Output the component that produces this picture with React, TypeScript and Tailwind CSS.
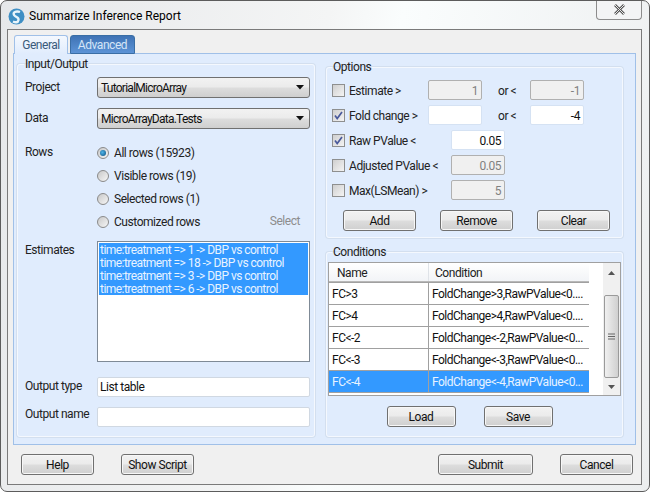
import React from "react";

const FONT = "font-['Roboto','Noto_Sans',sans-serif] tracking-[-0.45px]";

const BTN =
  "flex items-center justify-center h-[21px] pt-[1px] rounded-[3px] border border-[#707070] bg-[linear-gradient(#f2f2f2_0%,#ebebeb_48%,#dddddd_52%,#cfcfcf_100%)] shadow-[inset_0_0_0_1px_#f7f7f7] text-[12px] text-[#111]";

const Btn = ({ label, w }: { label: string; w: string }) => (
  <div className={`${BTN} ${w}`}>{label}</div>
);

const Combo = ({ value }: { value: string }) => (
  <div className="flex items-center justify-between h-[21px] w-[213px] rounded-[3px] border border-[#707070] bg-[linear-gradient(#f2f2f2_0%,#ebebeb_48%,#dddddd_52%,#cfcfcf_100%)] pl-[3px] pr-[3px] text-[12px] tracking-[-0.75px] text-[#111]">
    <span>{value}</span>
    <svg width="8" height="5" viewBox="0 0 8 5" className="mr-[2px]">
      <path d="M0 0h8L4 4.500z" fill="#111" />
    </svg>
  </div>
);

const Radio = ({ label, checked }: { label: string; checked?: boolean }) => (
  <div className="flex items-center h-[23px]">
    <div className="flex items-center justify-center w-[12px] h-[12px] rounded-full border border-[#8a8a8a] bg-[linear-gradient(135deg,#c8c8c8,#f6f6f6)]">
      {checked && <div className="w-[6px] h-[6px] rounded-full bg-[radial-gradient(circle_at_40%_40%,#4fb4e8,#0b4f80)]" />}
    </div>
    <span className="ml-[5px] text-[12px] text-[#222]">{label}</span>
  </div>
);

const Check = ({ checked }: { checked?: boolean }) => (
  <div className="flex items-center justify-center shrink-0 w-[13px] h-[13px] border border-[#8e8f8f] bg-[linear-gradient(135deg,#cfcfcf,#f4f4f4)]">
    {checked && (
      <svg width="9" height="9" viewBox="0 0 9 9">
        <path d="M1 4.500l2.200 3L8 1" fill="none" stroke="#4a5a9c" strokeWidth="1.700" />
      </svg>
    )}
  </div>
);

const Num = ({ value, w, off }: { value?: string; w: string; off?: boolean }) => (
  <div
    className={`flex items-center justify-end h-[20px] pt-[1px] pr-[3px] rounded-[2px] border text-[12px] ${w} ${
      off ? "bg-[#f0f0f0] border-[#b0b0b0] text-[#808080]" : "bg-white border-[#d5e2f3] text-[#111]"
    }`}
  >
    {value}
  </div>
);

const Group = ({ title, className, legend, children }: { title: string; className: string; legend: string; children: React.ReactNode }) => (
  <fieldset className={`rounded-[3px] border border-[#f4f8fe] shadow-[0_0_0_1px_#d3dfef] ${className}`}>
    <legend className={`px-[1px] text-[12px] leading-[16px] text-[#222] ${legend}`}>{title}</legend>
    {children}
  </fieldset>
);

const OptRow = ({ label, checked, children, w }: { label: string; checked?: boolean; children: React.ReactNode; w: string }) => (
  <div className="flex items-center h-[20px]">
    <Check checked={checked} />
    <span className={`ml-[4px] pt-[1px] text-[12px] text-[#222] whitespace-nowrap ${w}`}>{label}</span>
    {children}
  </div>
);

const ESTIMATES = [
  "time:treatment => 1 -> DBP vs control",
  "time:treatment => 18 -> DBP vs control",
  "time:treatment => 3 -> DBP vs control",
  "time:treatment => 6 -> DBP vs control",
];

const CONDITIONS = [
  ["FC>3", "FoldChange>3,RawPValue<0...."],
  ["FC>4", "FoldChange>4,RawPValue<0...."],
  ["FC<-2", "FoldChange<-2,RawPValue<0..."],
  ["FC<-3", "FoldChange<-3,RawPValue<0..."],
  ["FC<-4", "FoldChange<-4,RawPValue<0..."],
];

export default function App() {
  return (
    <div className={`relative w-[650px] h-[492px] overflow-hidden pl-[6px] pr-[7px] pt-[28px] pb-[6px] rounded-[7px] border border-[#5c5c5c] bg-[linear-gradient(100deg,#e6e8ea_0%,#f4f5f5_45%,#fafdfd_55%,#eceeef_100%)] ${FONT}`}>
      {/* Title bar */}
      <div className="absolute left-[7px] top-[6px] flex items-center">
        <svg width="17" height="17" viewBox="0 0 17 17">
          <circle cx="8.500" cy="8.500" r="8" fill="#3f8fc4" />
          <path d="M12 4C8 2.500 4.500 4.500 6 7s5 2 4.500 5-3.500 2.500-5.500 1.500" fill="none" stroke="#e8f4fb" strokeWidth="2.400" />
        </svg>
        <span className="ml-[4px] text-[12px] tracking-normal text-black">Summarize Inference Report</span>
      </div>
      <div className="absolute right-[7px] top-[-1px] flex items-center justify-center w-[46px] h-[20px] rounded-b-[4px] border border-t-0 border-[#8c8c8c] bg-[#f3f4f5]">
        <svg width="13" height="11" viewBox="0 0 13 11">
          <path d="M2 1l9 9M11 1l-9 9" stroke="#555" strokeWidth="2.600" />
          <path d="M2 1l9 9M11 1l-9 9" stroke="#e8e8e8" strokeWidth="1" />
        </svg>
      </div>

      {/* Client area */}
      <div className="flex flex-col h-full border border-[#7a7a7a] bg-[#f0f0f0] pl-[5px] pr-[5px]">
        {/* Tabs */}
        <div className="flex items-end h-[24px] pl-[1px] gap-[2px] mb-[-1px] relative">
          <div className="flex items-center justify-center w-[54px] h-[19px] rounded-t-[3px] border border-b-0 border-[#a0c0e8] bg-[linear-gradient(#f4f8fe,#e0ecfd)] text-[12px] text-[#3a5a7a]">General</div>
          <div className="flex items-center justify-center w-[65px] h-[19px] rounded-t-[3px] border border-[#3a6ea5] bg-[linear-gradient(#3f73b5,#5c93d6)] text-[12px] text-[#d5e5f7]">Advanced</div>
        </div>

        {/* Tab panel */}
        <div className="flex gap-[11px] h-[392px] border border-[#a0c0e8] bg-[#e0ecfd] pl-[3px] pr-[12px] pt-[2px]">
          {/* Input/Output */}
          <Group title="Input/Output" legend="ml-[-1px]" className="w-[299px] h-[381px] pl-[7px] pr-[4px]">
            <div className="flex items-center mt-[5px]">
              <span className="w-[72px] text-[12px] text-[#222] mt-[-2px]">Project</span>
              <Combo value="TutorialMicroArray" />
            </div>
            <div className="flex items-center mt-[10px]">
              <span className="w-[72px] text-[12px] text-[#222] mt-[-2px]">Data</span>
              <Combo value="MicroArrayData.Tests" />
            </div>
            <div className="flex mt-[12px]">
              <span className="w-[72px] text-[12px] text-[#222] leading-[23px]">Rows</span>
              <div className="relative w-[213px]">
                <Radio label="All rows (15923)" checked />
                <Radio label="Visible rows (19)" />
                <Radio label="Selected rows (1)" />
                <Radio label="Customized rows" />
                <span className="absolute right-[10px] bottom-[3px] text-[12px] text-[#8d8d8d]">Select</span>
              </div>
            </div>
            <div className="flex mt-[8px]">
              <span className="w-[72px] text-[12px] text-[#222]">Estimates</span>
              <div className="w-[213px] h-[121px] border border-[#7f8a96] bg-white pt-[1px] px-[1px]">
                {ESTIMATES.map((e) => (
                  <div key={e} className="h-[13px] bg-[#3399ff] pl-[1px] text-[12px] leading-[15px] tracking-[-0.55px] text-[#e8f3ff] whitespace-nowrap">
                    {e}
                  </div>
                ))}
              </div>
            </div>
            <div className="flex items-center mt-[15px]">
              <span className="w-[72px] text-[12px] text-[#222] mt-[-2px]">Output type</span>
              <div className="flex items-center w-[213px] h-[20px] border border-[#d0d8e2] rounded-[2px] bg-white pl-[2px] text-[12px] text-[#111]">List table</div>
            </div>
            <div className="flex items-center mt-[10px]">
              <span className="w-[72px] text-[12px] text-[#222] mt-[-6px]">Output name</span>
              <div className="w-[213px] h-[20px] border border-[#d0d8e2] rounded-[2px] bg-white" />
            </div>
          </Group>

          <div className="flex flex-col gap-[6px] w-[297px] mt-[3px]">
            {/* Options */}
            <Group title="Options" legend="ml-0" className="h-[179px] pl-[5px] pr-[5px]">
              <div className="flex flex-col gap-[5px] mt-[5px]">
                <OptRow label="Estimate >" w="w-[79px]">
                  <Num value="1" w="w-[54px]" off />
                  <span className="w-[48px] pl-[16px] pt-[1px] text-[12px] text-[#222]">or &lt;</span>
                  <Num value="-1" w="w-[54px]" off />
                </OptRow>
                <OptRow label="Fold change >" checked w="w-[79px]">
                  <Num w="w-[54px]" />
                  <span className="w-[48px] pl-[16px] pt-[1px] text-[12px] text-[#222]">or &lt;</span>
                  <Num value="-4" w="w-[54px]" />
                </OptRow>
                <OptRow label="Raw PValue <" checked w="w-[102px]">
                  <Num value="0.05" w="w-[54px]" />
                </OptRow>
                <OptRow label="Adjusted PValue <" w="w-[102px]">
                  <Num value="0.05" w="w-[54px]" off />
                </OptRow>
                <OptRow label="Max(LSMean) >" w="w-[102px]">
                  <Num value="5" w="w-[54px]" off />
                </OptRow>
              </div>
              <div className="flex justify-between pl-[11px] pr-[7px] mt-[10px]">
                <Btn label="Add" w="w-[73px]" />
                <Btn label="Remove" w="w-[73px]" />
                <Btn label="Clear" w="w-[73px]" />
              </div>
            </Group>

            {/* Conditions */}
            <Group title="Conditions" legend="ml-[4px]" className="h-[193px] pl-[1px] pr-[1px]">
              <div className="flex h-[134px] mt-[2px] w-[293px] border border-[#a0a0a0] bg-white">
                <div className="w-[260px]">
                  <div className="flex h-[19px] bg-[linear-gradient(#ffffff,#f2f4f7)] border-b border-[#b8b8b8] text-[12px] text-[#222]">
                    <span className="w-[100px] pl-[8px] border-r border-[#dfe3e8] leading-[20px]">Name</span>
                    <span className="pl-[6px] leading-[20px]">Condition</span>
                  </div>
                  <div className="border-t border-[#a0a0a0]">
                    {CONDITIONS.map(([name, cond], i) => (
                      <div
                        key={name}
                        className={`flex h-[22px] border-b border-[#a0a0a0] text-[12px] tracking-[-0.5px] ${
                          i === 4 ? "bg-[#3399ff] text-[#e8f3ff]" : "bg-white text-[#111]"
                        }`}
                      >
                        <span className="w-[100px] pl-[3px] border-r border-[#a0a0a0] leading-[23px]">{name}</span>
                        <span className="flex-1 pl-[3px] leading-[23px] whitespace-nowrap">{cond}</span>
                      </div>
                    ))}
                  </div>
                </div>
                <div className="flex-1" />
                {/* Scrollbar */}
                <div className="relative w-[17px] bg-[#f0f0f0]">
                  <svg width="7" height="4" viewBox="0 0 7 4" className="absolute left-[5px] top-[8px]">
                    <path d="M0 4L3.500 0 7 4z" fill="#555" />
                  </svg>
                  <div className="absolute left-[1px] top-[32px] flex items-center justify-center w-[15px] h-[83px] rounded-[2px] border border-[#9a9a9a] bg-[linear-gradient(90deg,#f0f0f0,#d0d0d0)]">
                    <svg width="7" height="7" viewBox="0 0 7 7">
                      <path d="M0 1h7M0 3.500h7M0 6h7" stroke="#666" />
                    </svg>
                  </div>
                  <svg width="7" height="4" viewBox="0 0 7 4" className="absolute left-[5px] bottom-[6px]">
                    <path d="M0 0L3.500 4 7 0z" fill="#555" />
                  </svg>
                </div>
              </div>
              <div className="flex justify-center gap-[28px] mt-[10px] pr-[10px]">
                <Btn label="Load" w="w-[69px]" />
                <Btn label="Save" w="w-[69px]" />
              </div>
            </Group>
          </div>
        </div>

        {/* Footer */}
        <div className="flex items-center h-[39px] pl-[8px] pr-[3px]">
          <Btn label="Help" w="w-[73px]" />
          <Btn label="Show Script" w="w-[73px] ml-[27px]" />
          <div className="flex-1" />
          <Btn label="Submit" w="w-[95px]" />
          <Btn label="Cancel" w="w-[73px] ml-[27px]" />
        </div>
      </div>
    </div>
  );
}
